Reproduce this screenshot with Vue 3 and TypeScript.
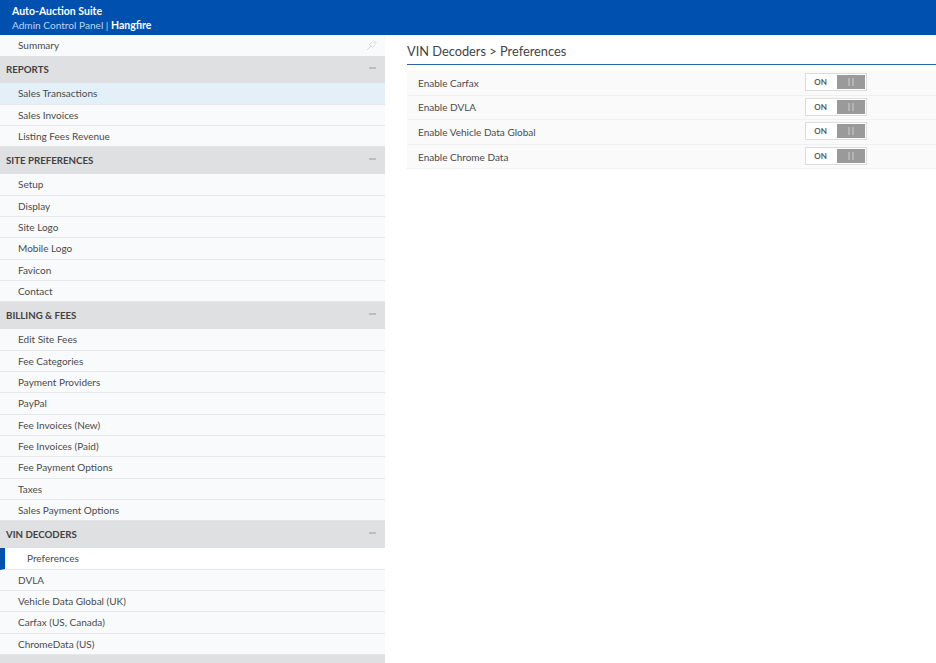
<template>
  <div class="page">
    <header class="topbar">
      <div class="brand">Auto-Auction Suite</div>
      <div class="crumb">Admin Control Panel | <b>Hangfire</b></div>
    </header>
    <div class="body-wrap">
      <aside class="sidebar">
        <div class="item summary">
          <span>Summary</span>
          <svg class="pin" width="12" height="12" viewBox="0 0 12 12">
            <path d="M1 11 L5.5 6.5 M7 2.5 L9.5 5 M6.5 3 L3.5 5.5 L6.5 8.5 L9 5.5 M8 1.5 L10.5 4" stroke="#d6d8da" stroke-width="1" fill="none" />
          </svg>
        </div>
        <template v-for="group in groups" :key="group.title">
          <div class="group-head">
            <span>{{ group.title }}</span>
            <i class="dash"></i>
          </div>
          <div
            v-for="link in group.links"
            :key="link"
            class="item"
            :class="{ hover: link === 'Sales Transactions', active: link === 'Preferences' }"
          >
            <span>{{ link }}</span>
          </div>
        </template>
        <div class="group-head"></div>
      </aside>
      <main class="content">
        <h1 class="title">VIN Decoders &gt; Preferences</h1>
        <div class="rows">
          <div v-for="name in settings" :key="name" class="row">
            <span>{{ name }}</span>
            <div class="toggle">
              <span class="on">ON</span>
              <span class="handle"><i></i><i></i></span>
            </div>
          </div>
        </div>
      </main>
    </div>
  </div>
</template>

<script setup lang="ts">
const groups = [
  { title: "REPORTS", links: ["Sales Transactions", "Sales Invoices", "Listing Fees Revenue"] },
  { title: "SITE PREFERENCES", links: ["Setup", "Display", "Site Logo", "Mobile Logo", "Favicon", "Contact"] },
  {
    title: "BILLING & FEES",
    links: [
      "Edit Site Fees",
      "Fee Categories",
      "Payment Providers",
      "PayPal",
      "Fee Invoices (New)",
      "Fee Invoices (Paid)",
      "Fee Payment Options",
      "Taxes",
      "Sales Payment Options",
    ],
  },
  { title: "VIN DECODERS", links: ["Preferences", "DVLA", "Vehicle Data Global (UK)", "Carfax (US, Canada)", "ChromeData (US)"] },
];

const settings = ["Enable Carfax", "Enable DVLA", "Enable Vehicle Data Global", "Enable Chrome Data"];
</script>

<style>
html,
body {
  margin: 0;
  background: #fff;
  overflow: hidden;
}
</style>

<style scoped>
.page {
  height: 663px;
  overflow: hidden;
  font-family: Lato, "Open Sans", sans-serif;
  color: #444;
  font-size: 10px;
}

.topbar {
  height: 35px;
  box-sizing: border-box;
  background: #0050b0;
  padding: 4px 12px 0;
  color: #bcd4f2;
  line-height: 14px;
  font-size: 10.1px;
}

.brand,
.crumb b {
  color: #fff;
  font-weight: 700;
}

.brand {
  font-size: 10.5px;
}

.crumb b {
  font-size: 10.5px;
}

.body-wrap {
  display: flex;
}

.sidebar {
  width: 385px;
  flex: none;
}

.item {
  height: 21.33px;
  box-sizing: border-box;
  display: flex;
  align-items: center;
  justify-content: space-between;
  padding: 0 6px 0 18px;
  background: #f9fafc;
  border-bottom: 1px solid #e6e7e9;
  color: #4a4a4a;
}

.summary {
  border-bottom: none;
  padding-bottom: 2px;
}

.pin {
  margin-right: 1px;
}

.item.hover {
  background: #e3f0f8;
}

.item.active {
  background: #fff;
  padding-left: 22px;
  border-left: 5px solid #0050b0;
}

.group-head {
  height: 27px;
  box-sizing: border-box;
  display: flex;
  align-items: center;
  justify-content: space-between;
  padding: 0 9px 2px 6px;
  background: #dfe0e2;
  font-weight: 700;
  font-size: 9.7px;
  color: #424242;
}

.dash {
  width: 7px;
  height: 2px;
  margin-bottom: 2px;
  background: #bcbdbf;
}

.content {
  flex: 1;
  padding: 0 0 0 22px;
}

.title {
  margin: 0;
  height: 30px;
  box-sizing: border-box;
  border-bottom: 1px solid #2a65a8;
  font-size: 12.8px;
  font-weight: 400;
  line-height: 33px;
  color: #444;
}

.rows {
  margin-top: 6px;
}

.row {
  height: 24.6px;
  box-sizing: border-box;
  display: flex;
  align-items: center;
  justify-content: space-between;
  padding: 0 69px 0 11px;
  background: #fafafa;
  border-bottom: 1px solid #f0f0f0;
  color: #4a4a4a;
}

.toggle {
  width: 62px;
  height: 18px;
  box-sizing: border-box;
  display: flex;
  background: #fff;
  border: 1px solid #dcdcdc;
  padding: 1px;
  margin-top: -1px;
}

.on {
  width: 30px;
  box-sizing: border-box;
  padding-right: 3px;
  text-align: center;
  font-size: 8px;
  line-height: 15px;
  color: #5a5a5a;
  font-weight: 700;
}

.handle {
  flex: 1;
  background: #9a9a9a;
  display: flex;
  align-items: center;
  justify-content: center;
  gap: 2px;
}

.handle i {
  width: 2px;
  height: 8px;
  background: #b4b4b4;
}
</style>
